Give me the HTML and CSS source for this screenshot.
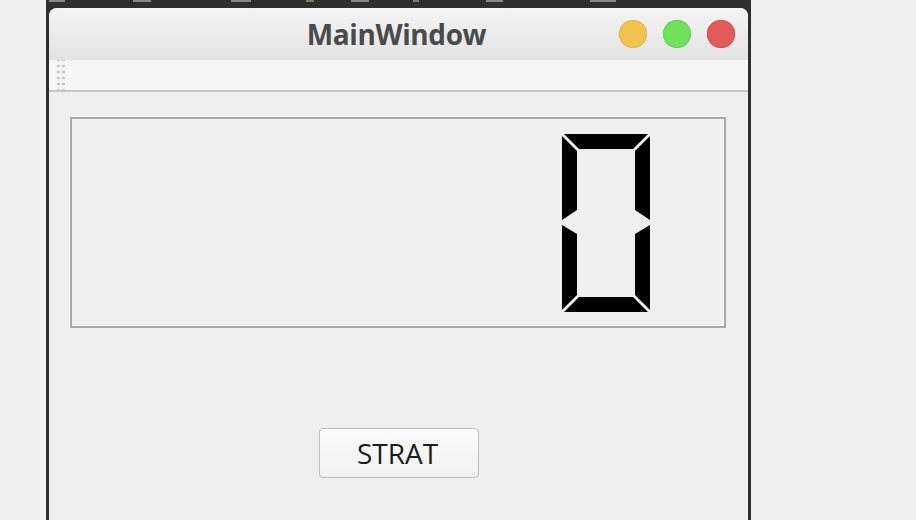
FILE: index.html
```html
<!DOCTYPE html>
<html>
<head>
<meta charset="utf-8">
<link rel="stylesheet" href="styles.css">
</head>
<body>
<div class="desk">
  <div class="frame">
    <div class="strip">
      <span class="tab t1"></span>
      <span class="tab t2"></span>
      <span class="tab t3"></span>
      <span class="tab t4"></span>
      <span class="tab t5"></span>
      <span class="tab t6"></span>
      <span class="tab t7"></span>
      <span class="tab t8"></span>
    </div>
    <div class="window">
      <div class="titlebar">
        <div></div>
        <div class="title">MainWindow</div>
        <div class="lights">
          <span class="light yellow"></span>
          <span class="light green"></span>
          <span class="light red"></span>
        </div>
      </div>
      <div class="toolbar"><div class="grip"></div></div>
      <div class="content">
        <div class="lcd">
          <svg class="digit" width="88" height="178" viewBox="0 0 88 178">
            <polygon points="2,0 86,0 71,15 17,15"/>
            <polygon points="0,2 15,17 15,76 0,86"/>
            <polygon points="0,91 15,100 15,161 0,176"/>
            <polygon points="17,163 71,163 86,178 2,178"/>
            <polygon points="88,2 88,86 73,76 73,17"/>
            <polygon points="88,91 88,176 73,161 73,100"/>
          </svg>
        </div>
        <div class="actions">
          <button class="btn">STRAT</button>
        </div>
      </div>
    </div>
  </div>
</div>
</body>
</html>
```
FILE: styles.css
```css
html, body {
  margin: 0;
  padding: 0;
}
body {
  width: 916px;
  height: 520px;
  overflow: hidden;
  background: #eff0f3;
  font-family: "Open Sans", "Noto Sans", sans-serif;
}
.desk {
  display: flex;
  padding-left: 46px;
  height: 520px;
}
.frame {
  width: 705px;
  height: 520px;
  background: #2f2f2f;
  padding: 0 3px;
  box-sizing: border-box;
  display: flex;
  flex-direction: column;
}
.strip {
  height: 8px;
  display: flex;
  align-items: flex-start;
  flex: none;
}
.tab {
  display: block;
  height: 2px;
  background: #8a8a8a;
  flex: none;
}
.t1 { margin-left: 0; width: 16px; }
.t2 { margin-left: 68px; width: 18px; }
.t3 { margin-left: 80px; width: 20px; }
.t4 { margin-left: 55px; width: 8px; background: #8a7560; }
.t5 { margin-left: 37px; width: 18px; }
.t6 { margin-left: 44px; width: 6px; background: #8a7560; }
.t7 { margin-left: 67px; width: 17px; }
.t8 { margin-left: 87px; width: 26px; }
.window {
  flex: 1;
  background: #efefef;
  border-radius: 8px 8px 0 0;
  display: flex;
  flex-direction: column;
  overflow: hidden;
}
.titlebar {
  height: 52px;
  flex: none;
  background: linear-gradient(#f4f4f4, #e3e3e3);
  display: grid;
  grid-template-columns: 1fr auto 1fr;
  align-items: center;
}
.title {
  font-weight: 700;
  font-size: 28px;
  color: #4a4a4a;
  line-height: 52px;
  letter-spacing: -0.4px;
  padding-right: 4px;
}
.lights {
  display: flex;
  justify-content: flex-end;
  gap: 16px;
  padding-right: 13px;
}
.light {
  width: 28px;
  height: 28px;
  border-radius: 50%;
  display: block;
}
.yellow { background: #f4c24f; box-shadow: inset 0 0 0 1px #e8b444; }
.green { background: #6ee25b; box-shadow: inset 0 0 0 1px #62d451; }
.red { background: #e25b58; box-shadow: inset 0 0 0 1px #d6504e; }
.toolbar {
  height: 30px;
  flex: none;
  background: #f6f6f6;
  border-bottom: 2px solid #c6c6c6;
  padding-left: 7px;
  display: flex;
}
.grip {
  width: 10px;
  height: 32px;
  background-image: radial-gradient(circle, #c4c4c4 1.2px, transparent 1.6px);
  background-size: 5px 6px;
  background-position: 0 -3px;
}
.content {
  flex: 1;
  padding: 25px 21px 0 21px;
  display: flex;
  flex-direction: column;
}
.lcd {
  width: 656px;
  height: 211px;
  box-sizing: border-box;
  border: 2px solid #a9a9a9;
  box-shadow: inset -1px -1px 0 #ffffff, -1px -1px 0 #f8f8f8;
  display: flex;
  justify-content: flex-end;
  align-items: center;
  padding-right: 74px;
  padding-top: 1px;
}
.digit polygon {
  fill: #000;
}
.actions {
  display: flex;
  justify-content: center;
  padding-top: 100px;
}
.btn {
  width: 160px;
  height: 50px;
  box-sizing: border-box;
  border: 1px solid #bdbdbd;
  border-radius: 4px;
  background: linear-gradient(#fbfbfb, #f1f1f1);
  font-family: "Open Sans", "Noto Sans", sans-serif;
  font-size: 28px;
  color: #1c1c1c;
  padding: 0 2px 0 0;
  line-height: 48px;
}
```
